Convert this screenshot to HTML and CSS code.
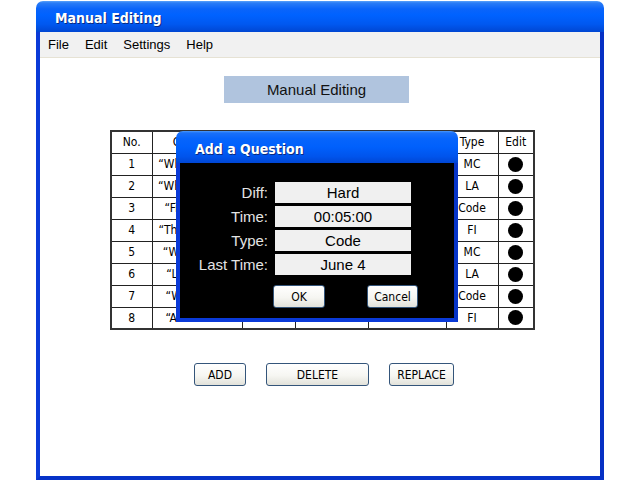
FILE: index.html
```html
<!DOCTYPE html>
<html>
<head>
<meta charset="utf-8">
<title>Manual Editing</title>
<link rel="stylesheet" href="styles.css">
</head>
<body>
<div class="window">
  <div class="titlebar"><span class="title">Manual Editing</span></div>
  <div class="frame">
    <div class="menubar">
      <span class="menu-item">File</span>
      <span class="menu-item">Edit</span>
      <span class="menu-item">Settings</span>
      <span class="menu-item">Help</span>
    </div>
    <div class="content">
      <div class="heading">Manual Editing</div>
      <table class="qtable">
        <colgroup>
          <col class="c-no"><col class="c-q"><col class="c-diff"><col class="c-time"><col class="c-last"><col class="c-type"><col class="c-edit">
        </colgroup>
        <tr><th>No.</th><th>Question</th><th></th><th></th><th></th><th>Type</th><th>Edit</th></tr>
        <tr><td>1</td><td class="q">“What is OO?”</td><td></td><td></td><td></td><td>MC</td><td><span class="dot"></span></td></tr>
        <tr><td>2</td><td class="q">“What is loop”</td><td></td><td></td><td></td><td>LA</td><td><span class="dot"></span></td></tr>
        <tr><td>3</td><td class="q">“Find sums”</td><td></td><td></td><td></td><td>Code</td><td><span class="dot"></span></td></tr>
        <tr><td>4</td><td class="q">“The class is:”</td><td></td><td></td><td></td><td>FI</td><td><span class="dot"></span></td></tr>
        <tr><td>5</td><td class="q">“Why use it”</td><td></td><td></td><td></td><td>MC</td><td><span class="dot"></span></td></tr>
        <tr><td>6</td><td class="q">“List uses.”</td><td></td><td></td><td></td><td>LA</td><td><span class="dot"></span></td></tr>
        <tr><td>7</td><td class="q">“Write this”</td><td></td><td></td><td></td><td>Code</td><td><span class="dot"></span></td></tr>
        <tr><td>8</td><td class="q">“A class is:”</td><td></td><td></td><td></td><td>FI</td><td><span class="dot"></span></td></tr>
      </table>
      <div class="actions">
        <button class="btn btn-add">ADD</button>
        <button class="btn btn-delete">DELETE</button>
        <button class="btn btn-replace">REPLACE</button>
      </div>
    </div>
  </div>
</div>

<div class="dialog">
  <div class="dialog-title">Add a Question</div>
  <div class="dialog-body">
    <div class="form">
      <span class="label">Diff:</span><span class="field">Hard</span>
      <span class="label">Time:</span><span class="field">00:05:00</span>
      <span class="label">Type:</span><span class="field">Code</span>
      <span class="label">Last Time:</span><span class="field">June 4</span>
    </div>
    <div class="dialog-buttons">
      <button class="btn btn-ok">OK</button>
      <button class="btn btn-cancel">Cancel</button>
    </div>
  </div>
</div>
</body>
</html>
```

FILE: styles.css
```css
html, body {
  margin: 0;
  padding: 0;
  width: 640px;
  height: 480px;
  overflow: hidden;
  background: #fff;
}

body {
  position: relative;
  font-family: "DejaVu Sans Condensed", "DejaVu Sans", sans-serif;
}

.window {
  margin: 1px 0 0 36px;
  width: 568px;
}

.titlebar {
  height: 31px;
  box-sizing: border-box;
  padding: 6px 0 0 19px;
  border-radius: 7px 7px 0 0;
  background: linear-gradient(#5aa2fa 0, #2a7cf6 2px, #0a64fa 8px, #0062ff 45%, #0058f0 75%, #0046d2 100%);
}

.title {
  font-family: "DejaVu Sans Condensed", "DejaVu Sans", sans-serif;
  font-weight: bold;
  font-size: 14px;
  line-height: 22px;
  color: #fff;
  text-shadow: 1px 1px 0 #0a2a80;
}

.frame {
  height: 448px;
  box-sizing: border-box;
  border: 4px solid #0a3ad8;
  border-top: 0;
  border-right-color: #0630c4;
  border-bottom-color: #0632c8;
  background: #fff;
}

.menubar {
  height: 26px;
  box-sizing: border-box;
  display: flex;
  align-items: center;
  gap: 16px;
  padding-left: 8px;
  background: #f1f1f1;
  border-bottom: 1px solid #e6e2d4;
  font-family: "Liberation Sans", Arial, sans-serif;
  font-size: 13px;
  color: #000;
}

.content {
  padding-top: 18px;
}

.heading {
  margin-left: 184px;
  width: 185px;
  height: 27px;
  background: #b0c4de;
  font-family: "Liberation Sans", Arial, sans-serif;
  font-size: 15px;
  line-height: 27px;
  text-align: center;
  color: #111;
}

.qtable {
  margin: 27px 0 0 70px;
  border-collapse: collapse;
  table-layout: fixed;
  width: 423px;
  border: 2px solid #333;
  font-size: 12px;
  color: #000;
}

.c-no { width: 41px; }
.c-q { width: 90px; }
.c-diff { width: 53px; }
.c-time { width: 73px; }
.c-last { width: 78px; }
.c-type { width: 52px; }
.c-edit { width: 36px; }

.qtable th, .qtable td {
  height: 22px;
  box-sizing: border-box;
  padding: 0;
  border: 1px solid #222;
  text-align: center;
  font-weight: normal;
  white-space: nowrap;
  overflow: hidden;
  vertical-align: middle;
}

.dot {
  display: inline-block;
  width: 15px;
  height: 15px;
  border-radius: 50%;
  background: #000;
  vertical-align: middle;
}

.actions {
  display: flex;
  gap: 20px;
  margin: 33px 0 0 154px;
}

.btn {
  height: 23px;
  box-sizing: border-box;
  padding: 0;
  border: 1px solid #34557a;
  border-radius: 3px;
  background: linear-gradient(#ffffff, #f6f6f2 55%, #e2e2da);
  font-family: "DejaVu Sans Condensed", "DejaVu Sans", sans-serif;
  font-size: 12px;
  color: #000;
}

.btn-add { width: 52px; }
.btn-delete { width: 103px; }
.btn-replace { width: 65px; }

.dialog {
  position: absolute;
  left: 176px;
  top: 131px;
  width: 282px;
}

.dialog-title {
  height: 32px;
  box-sizing: border-box;
  padding: 8px 0 0 19px;
  border-radius: 7px 7px 0 0;
  background: linear-gradient(#4a98fa 0, #1a70f8 2px, #0664fc 8px, #0060fc 50%, #0054ec 80%, #0046d4 100%);
  font-weight: bold;
  font-size: 14px;
  line-height: 20px;
  color: #fff;
  text-shadow: 1px 1px 0 #0a2a80;
}

.dialog-body {
  background: #000;
  border: 4px solid #0a3ad8;
  border-top: 0;
  border-right-color: #0634c8;
  padding: 19px 0 10px;
}

.form {
  display: grid;
  grid-template-columns: 88px 136px;
  grid-auto-rows: 21px;
  gap: 3px 7px;
  font-family: "Liberation Sans", Arial, sans-serif;
  font-size: 15px;
  line-height: 21px;
}

.label {
  text-align: right;
  color: #e4e4e4;
}

.field {
  background: #f0f0f0;
  color: #000;
  text-align: center;
}

.dialog-buttons {
  display: flex;
  gap: 42px;
  margin-top: 10px;
  padding-left: 93px;
}

.btn-ok { width: 52px; }
.btn-cancel { width: 51px; }
```
